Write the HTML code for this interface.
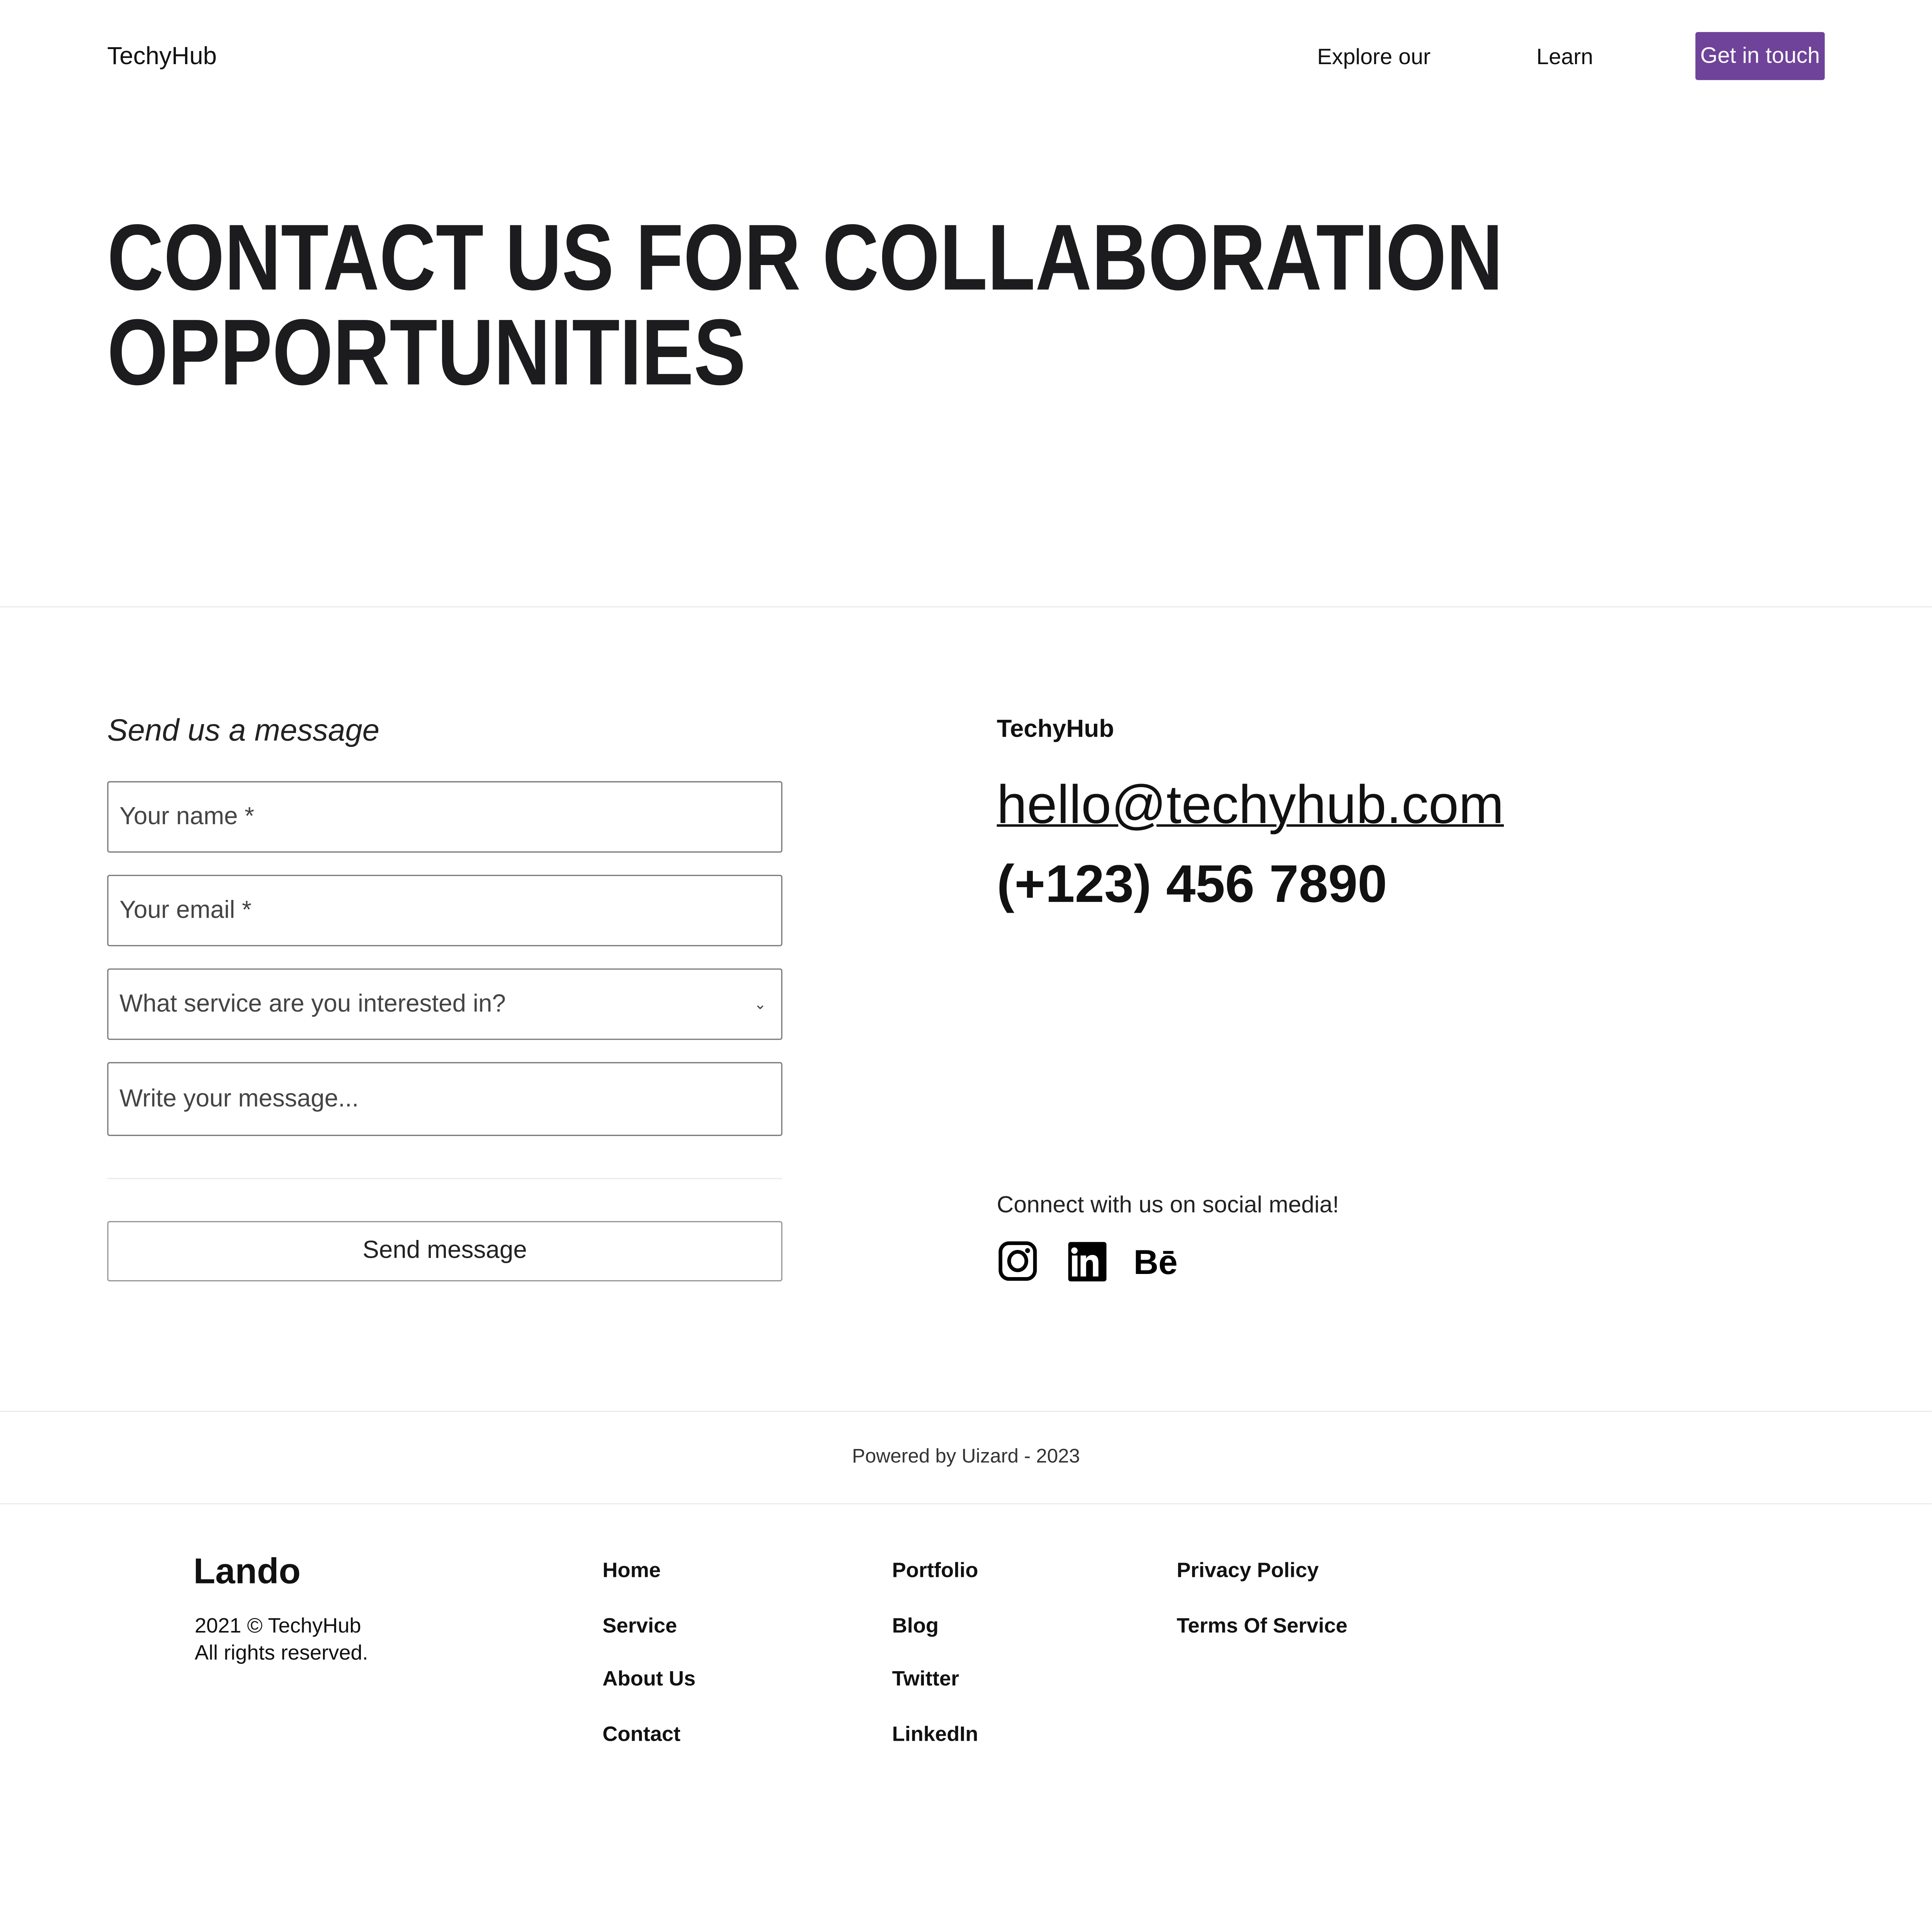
<!DOCTYPE html>
<html><head><meta charset="utf-8"><style>
html,body{margin:0;padding:0;background:#fff}
body{width:100vw;height:100vh;overflow:hidden;position:relative}
#p{position:absolute;left:0;top:0;width:1568px;height:1535px;transform:scale(3.1887);transform-origin:0 0;font-family:"Liberation Sans",sans-serif;color:#111;overflow:hidden}
.a{position:absolute;white-space:nowrap}
.hr{position:absolute;left:0;width:1568px;height:1px;background:#ececec}
.in{position:absolute;left:87px;width:548px;border:1px solid #7a7a7a;border-radius:2px;font-size:20px;color:#444;box-sizing:border-box;padding-left:9px;display:flex;align-items:center}
.f{position:absolute;font-size:17px;font-weight:bold;color:#111}
</style></head><body><div id="p">
<div class="a" style="left:87px;top:35px;font-size:20px">TechyHub</div>
<div class="a" style="left:1069px;top:36px;font-size:18px">Explore our</div>
<div class="a" style="left:1247px;top:36px;font-size:18px">Learn</div>
<div class="a" style="left:1376px;top:26px;width:105px;height:39px;background:#6f4399;border-radius:2px;color:#fff;font-size:18px;line-height:39px;text-align:center;overflow:hidden">Get in touch</div>
<div class="a" style="left:87px;top:171px;font-size:76px;line-height:77px;font-weight:bold;color:#1c1c1e;transform:scaleX(0.835);transform-origin:0 0">CONTACT US FOR COLLABORATION<br>OPPORTUNITIES</div>
<div class="hr" style="top:492px"></div>
<div class="a" style="left:87px;top:579px;font-size:25px;font-style:italic;color:#222">Send us a message</div>
<div class="in" style="top:634px;height:58px">Your name *</div>
<div class="in" style="top:710px;height:58px">Your email *</div>
<div class="in" style="top:786px;height:58px">What service are you interested in?<span style="position:absolute;right:12px;font-size:12px">&#8964;</span></div>
<div class="in" style="top:862px;height:60px">Write your message...</div>
<div class="a" style="left:87px;top:956px;width:548px;height:1px;background:#ececec"></div>
<div class="in" style="top:991px;height:49px;justify-content:center;padding:0;color:#222;border-color:#999">Send message</div>
<div class="a" style="left:809px;top:581px;font-size:20px;font-weight:bold">TechyHub</div>
<div class="a" style="left:809px;top:629px;font-size:44px;text-decoration:underline;text-decoration-thickness:2px">hello@techyhub.com</div>
<div class="a" style="left:809px;top:694px;font-size:43px;font-weight:bold;color:#111">(+123) 456 7890</div>
<div class="a" style="left:809px;top:968px;font-size:19px;color:#222">Connect with us on social media!</div>
<svg class="a" style="left:809px;top:1006px" width="160" height="35" viewBox="0 0 160 35">
<rect x="3" y="3" width="28" height="29" rx="7" fill="none" stroke="#000" stroke-width="3"/>
<ellipse cx="17" cy="17.5" rx="7" ry="7.5" fill="none" stroke="#000" stroke-width="3"/>
<circle cx="25" cy="9" r="2" fill="#000"/>
<rect x="58" y="2" width="31" height="32" rx="2" fill="#000"/>
<circle cx="63" cy="9" r="2.6" fill="#fff"/>
<rect x="61" y="13" width="4.5" height="17" fill="#fff"/>
<path d="M68 13h4.5v2.5c1-2 3-3 5-3c4 0 5 2.5 5 6.5v11h-4.5v-10c0-2-.5-3.5-2.5-3.5s-3 1.5-3 3.5v10H68z" fill="#fff"/>
<text x="111" y="28" font-family="Liberation Sans" font-weight="bold" font-size="28" fill="#000">Bē</text>
</svg>
<div class="hr" style="top:1145px"></div>
<div class="a" style="left:0;width:1568px;text-align:center;top:1174px;font-size:16px;color:#333">Powered by Uizard - 2023</div>
<div class="hr" style="top:1220px"></div>
<div class="a" style="left:157px;top:1260px;font-size:29px;font-weight:bold">Lando</div>
<div class="a" style="left:158px;top:1309px;font-size:17px;line-height:22px">2021 © TechyHub<br>All rights reserved.</div>
<div class="f" style="left:489px;top:1265px">Home</div>
<div class="f" style="left:489px;top:1310px;width:60px;overflow:hidden">Services</div>
<div class="f" style="left:489px;top:1353px">About Us</div>
<div class="f" style="left:489px;top:1398px">Contact</div>
<div class="f" style="left:724px;top:1265px">Portfolio</div>
<div class="f" style="left:724px;top:1310px">Blog</div>
<div class="f" style="left:724px;top:1353px">Twitter</div>
<div class="f" style="left:724px;top:1398px">LinkedIn</div>
<div class="f" style="left:955px;top:1265px">Privacy Policy</div>
<div class="f" style="left:955px;top:1310px">Terms Of Service</div>
</div></body></html>
